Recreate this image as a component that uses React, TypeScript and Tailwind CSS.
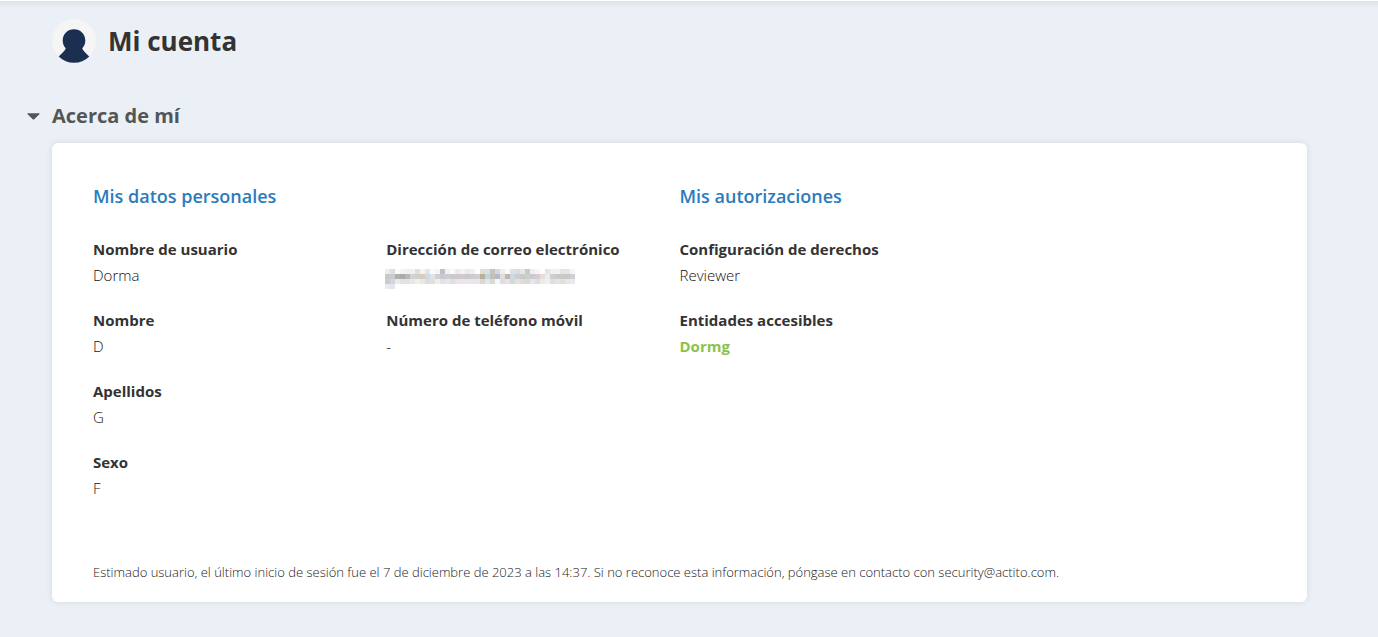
type FieldData = { label: string; value: string; kind?: "link" | "masked" };

const MASK = [
  "efecea dcdfdc fafafa f4f2f2 f0eff2 eef1f8 e0dfd9 f9f3ed dde5ee fdfcfa f7f5f3 bfbfca f0f1f0 fafafd f0e9e8 f5f2f2 ebe9ed f0eff5 fdfdfd e8dace d2e2ea c6c3bb d3d9dd f0eeea f8fafc dfe3e3 dcdcd8 e2e8e4 c8cac8 efeff0 f6f5f8 ffffff e5e5e5 f1f0ee f1f1ef e3e6e2 e4e6e2 f3f5f8",
  "c8c8c6 c9cccc adb1b1 aaa9ab b6b9b7 d2d2d4 cfd1cd d9cbbe cbdae3 dfe4e4 d1d1cf c8cacf ceccd0 cbcaca cdc8cd cfc9cf cac7cb cfccd0 d0ced3 b7b09a bfd5dd c4c0b8 b4bacb dbdedc c2b7ad cbd9e6 d0cdd2 c8cbc8 ccd0cc cacacc d2cfd4 ecd9d0 e1eff9 cecdd0 c9c9c5 c7cbc9 c5cac9 d2cdd4",
  "cbcccb d2d7df ebeae9 e3e4e2 e4e3e3 e8e7ec f0efee e9e7e2 d8dfe3 e0e0df eeeeec e1e2e4 e5e7e9 dfdfe0 e9e5ec eae6ec eae6ec e9e6eb e9e6ec d9d7ce e6e6e2 d8d9d8 f3f8ff dfdedb e4e5e4 d9d8d6 e2e2e0 dedbd8 d9d9da e8e8e8 dededc ebebec f1f1f2 dfdfdf e4e5e4 e0e1df e7e7e6 e9eaea",
].map((row) => row.split(" "));

function MaskedValue() {
  return (
    <svg width="190" height="20" viewBox="0 0 190 20" shapeRendering="crispEdges" role="img" aria-label="Oculto" className="-ml-px shrink-0">
      {MASK.map((row, y) =>
        row.map((c, x) => <rect key={`${x}-${y}`} x={x * 5} y={y * 5} width="5" height="5" fill={`#${c}`} />)
      )}
      <rect x="0" y="15" width="5" height="5" fill="#ece9e8" />
      <rect x="5" y="15" width="5" height="5" fill="#e2e6ec" />
    </svg>
  );
}

function Field({ label, value, kind }: FieldData) {
  return (
    <div>
      <dt className="text-[15px] leading-6 font-bold">{label}</dt>
      <dd className="mt-0.5 text-[15px] leading-6 font-light text-[#111]">
        {kind === "masked" ? (
          <div className="flex h-6 items-start pt-1.5">
            <MaskedValue />
          </div>
        ) : kind === "link" ? (
          <a href="#dormg" className="font-bold text-[#8bc34a]">{value}</a>
        ) : (
          value
        )}
      </dd>
    </div>
  );
}

function FieldColumn({ fields }: { fields: FieldData[] }) {
  return (
    <dl className="flex flex-col gap-[21px]">
      {fields.map((f) => (
        <Field key={f.label} {...f} />
      ))}
    </dl>
  );
}

const identity: FieldData[] = [
  { label: "Nombre de usuario", value: "Dorma" },
  { label: "Nombre", value: "D" },
  { label: "Apellidos", value: "G" },
  { label: "Sexo", value: "F" },
];
const contact: FieldData[] = [
  { label: "Dirección de correo electrónico", value: "", kind: "masked" },
  { label: "Número de teléfono móvil", value: "-" },
];
const rights: FieldData[] = [
  { label: "Configuración de derechos", value: "Reviewer" },
  { label: "Entidades accesibles", value: "Dormg", kind: "link" },
];

export default function App() {
  return (
    <div className="min-h-screen bg-[#ebf0f7] font-['Open_Sans',sans-serif] text-[#333]">
      <div className="h-2 border-t border-white bg-linear-to-b from-[#dde3e6] to-[#ebf0f7]" />
      <main className="pr-[71px] pb-[35px] pl-[52px]">
        <header className="flex items-center gap-3 pt-[11px]">
          <svg width="44" height="44" viewBox="0 0 44 44" aria-hidden="true">
            <circle cx="22" cy="22" r="22" fill="#f5f5f5" />
            <path d="M22 10.300c6.300 0 11.300 4.700 11.300 11.200 0 3.500-1.300 5.600-3 7.800.2 1.700 3.300 4.700 7 8.200A22 22 0 0 1 22 43.800a22 22 0 0 1-15.300-6.300c3.700-3.500 6.800-6.500 7-8.200-1.700-2.200-3-4.300-3-7.800 0-6.500 5-11.200 11.300-11.200z" fill="#1b3050" />
          </svg>
          <h1 className="text-[26px] leading-9 font-bold">Mi cuenta</h1>
        </header>
        <section>
          <h2 className="mt-[37px] -ml-[25px]">
            <button type="button" aria-expanded="true" className="flex items-center gap-3 text-xl leading-8 font-bold text-[#555]">
              <svg width="13" height="7" viewBox="0 0 13 7" aria-hidden="true">
                <path d="M1 .2h11c.6 0 .8.600.4 1L7.300 6.300c-.4.400-1.200.4-1.600 0L.6 1.200C.2.800.4.200 1 .200z" fill="#555" />
              </svg>
              Acerca de mí
            </button>
          </h2>
          <div className="mt-[11px] rounded-md bg-white px-[41px] pt-[39px] pb-[18px] shadow-[0_0_6px_rgba(0,0,0,0.1)]">
            <div className="grid grid-cols-4">
              <h3 className="col-span-2 text-lg leading-7 font-semibold text-[#2b7bbd]">Mis datos personales</h3>
              <h3 className="col-span-2 text-lg leading-7 font-semibold text-[#2b7bbd]">Mis autorizaciones</h3>
            </div>
            <div className="mt-[27px] grid grid-cols-4">
              <FieldColumn fields={identity} />
              <FieldColumn fields={contact} />
              <FieldColumn fields={rights} />
            </div>
            <p className="mt-[60px] text-[13px] leading-6 font-light text-[#222]">
              Estimado usuario, el último inicio de sesión fue el 7 de diciembre de 2023 a las 14:37. Si no reconoce esta información, póngase en contacto con security@actito.com.
            </p>
          </div>
        </section>
      </main>
    </div>
  );
}
